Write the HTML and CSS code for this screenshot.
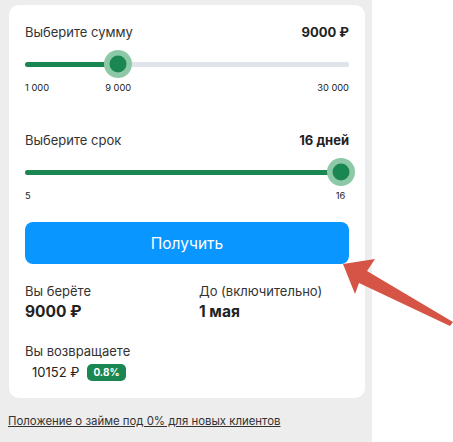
FILE: index.html
```html
<!DOCTYPE html>
<html lang="ru">
<head>
    <meta charset="UTF-8">
    <meta name="viewport" content="width=device-width, initial-scale=1.0">
    <title>Займ</title>
    <link rel="stylesheet" href="styles.css">
</head>
<body>
    <div class="panel">
        <div class="loan-card">
            <!-- сумма -->
            <div class="field-head">
                <span class="field-label">Выберите сумму</span>
                <span class="field-value">9000 ₽</span>
            </div>
            <div class="slider" style="--p: 0.2759">
                <div class="track"><div class="fill"></div></div>
                <div class="thumb"></div>
            </div>
            <div class="marks" style="--p: 0.2759">
                <span class="mark-min">1 000</span>
                <span class="mark-cur">9 000</span>
                <span class="mark-max">30 000</span>
            </div>

            <!-- срок -->
            <div class="field-head second">
                <span class="field-label">Выберите срок</span>
                <span class="field-value">16 дней</span>
            </div>
            <div class="slider" style="--p: 1">
                <div class="track"><div class="fill"></div></div>
                <div class="thumb"></div>
            </div>
            <div class="marks" style="--p: 1">
                <span class="mark-min">5</span>
                <span class="mark-cur">16</span>
            </div>

            <button class="get-btn">Получить</button>

            <div class="summary">
                <div class="sum-item">
                    <div class="sum-label">Вы берёте</div>
                    <div class="sum-value">9000 ₽</div>
                </div>
                <div class="sum-item">
                    <div class="sum-label">До (включительно)</div>
                    <div class="sum-value">1 мая</div>
                </div>
            </div>

            <div class="return-block">
                <div class="sum-label">Вы возвращаете</div>
                <div class="return-row">
                    <span class="return-value">10152 ₽</span>
                    <span class="rate-badge">0.8%</span>
                </div>
            </div>
        </div>

        <a class="terms-link" href="#">Положение о займе под 0% для новых клиентов</a>
    </div>

    <!-- стрелка-указатель -->
    <svg class="pointer-arrow" width="453" height="442" viewBox="0 0 453 442">
        <polygon points="343,264 375,259 367,271 453,322 450,326 359,283 355,294" fill="#d55446"/>
    </svg>
</body>
</html>
```

FILE: styles.css
```css
* {
    box-sizing: border-box;
}

body {
    margin: 0;
    background: #fff;
    font-family: Inter, "Noto Sans", sans-serif;
    color: #222;
    position: relative;
    height: 442px;
    overflow: hidden;
}

/* серая колонка */
.panel {
    width: 372px;
    height: 442px;
    background: #ededed;
    padding: 5px 7px 0 9px;
}

.loan-card {
    background: #fff;
    border-radius: 10px;
    padding: 17px 16px 15px;
}

.field-head {
    display: flex;
    justify-content: space-between;
    align-items: center;
    height: 20px;
}
.field-head.second {
    margin-top: 35px;
}
.field-label {
    font-size: 13px;
    color: #333;
}
.field-value {
    font-size: 13px;
    font-weight: 700;
    color: #222;
}

/* слайдер */
.slider {
    position: relative;
    height: 28px;
    margin-top: 8px;
}
.track {
    position: absolute;
    left: 0;
    right: 0;
    top: 12px;
    height: 5px;
    border-radius: 3px;
    background: #dfe4ea;
}
.fill {
    height: 100%;
    border-radius: 3px;
    background: #1a8753;
    width: calc(8.5px + var(--p) * (100% - 17px));
}
.thumb {
    position: absolute;
    top: 50%;
    left: calc(8.5px + var(--p) * (100% - 17px));
    width: 17px;
    height: 17px;
    border-radius: 50%;
    background: #1a8753;
    box-shadow: 0 0 0 5.5px #8ec9a7;
    transform: translate(-50%, -50%);
}

.marks {
    position: relative;
    height: 14px;
    margin-top: 3px;
    font-size: 9.3px;
    line-height: 14px;
    color: #222;
}
.mark-min {
    position: absolute;
    left: 0;
}
.mark-cur {
    position: absolute;
    left: calc(8.5px + var(--p) * (100% - 17px));
    transform: translateX(-50%);
}
.mark-max {
    position: absolute;
    right: 0;
}

/* кнопка */
.get-btn {
    display: block;
    width: 100%;
    height: 42px;
    margin-top: 19px;
    border: none;
    border-radius: 8px;
    background: #0a96ff;
    color: #fff;
    font-family: inherit;
    font-size: 15.5px;
    cursor: pointer;
}

.summary {
    display: grid;
    grid-template-columns: 174px 1fr;
    margin-top: 17px;
}
.sum-label {
    font-size: 13px;
    line-height: 20px;
    color: #333;
}
.sum-value {
    font-size: 15.5px;
    font-weight: 700;
    line-height: 22px;
}

.return-block {
    margin-top: 18px;
}
.return-row {
    display: flex;
    align-items: center;
    gap: 8px;
    height: 22px;
    padding-left: 7px;
}
.return-value {
    font-size: 13px;
    color: #222;
}
.rate-badge {
    background: #1a8753;
    color: #fff;
    font-size: 10px;
    font-weight: 700;
    border-radius: 5px;
    padding: 2px 6px;
    line-height: 13px;
}

.terms-link {
    display: inline-block;
    margin: 16px 0 0 -1px;
    font-size: 11.4px;
    color: #333;
    text-decoration: underline;
}

.pointer-arrow {
    position: absolute;
    left: 0;
    top: 0;
    pointer-events: none;
}
```
